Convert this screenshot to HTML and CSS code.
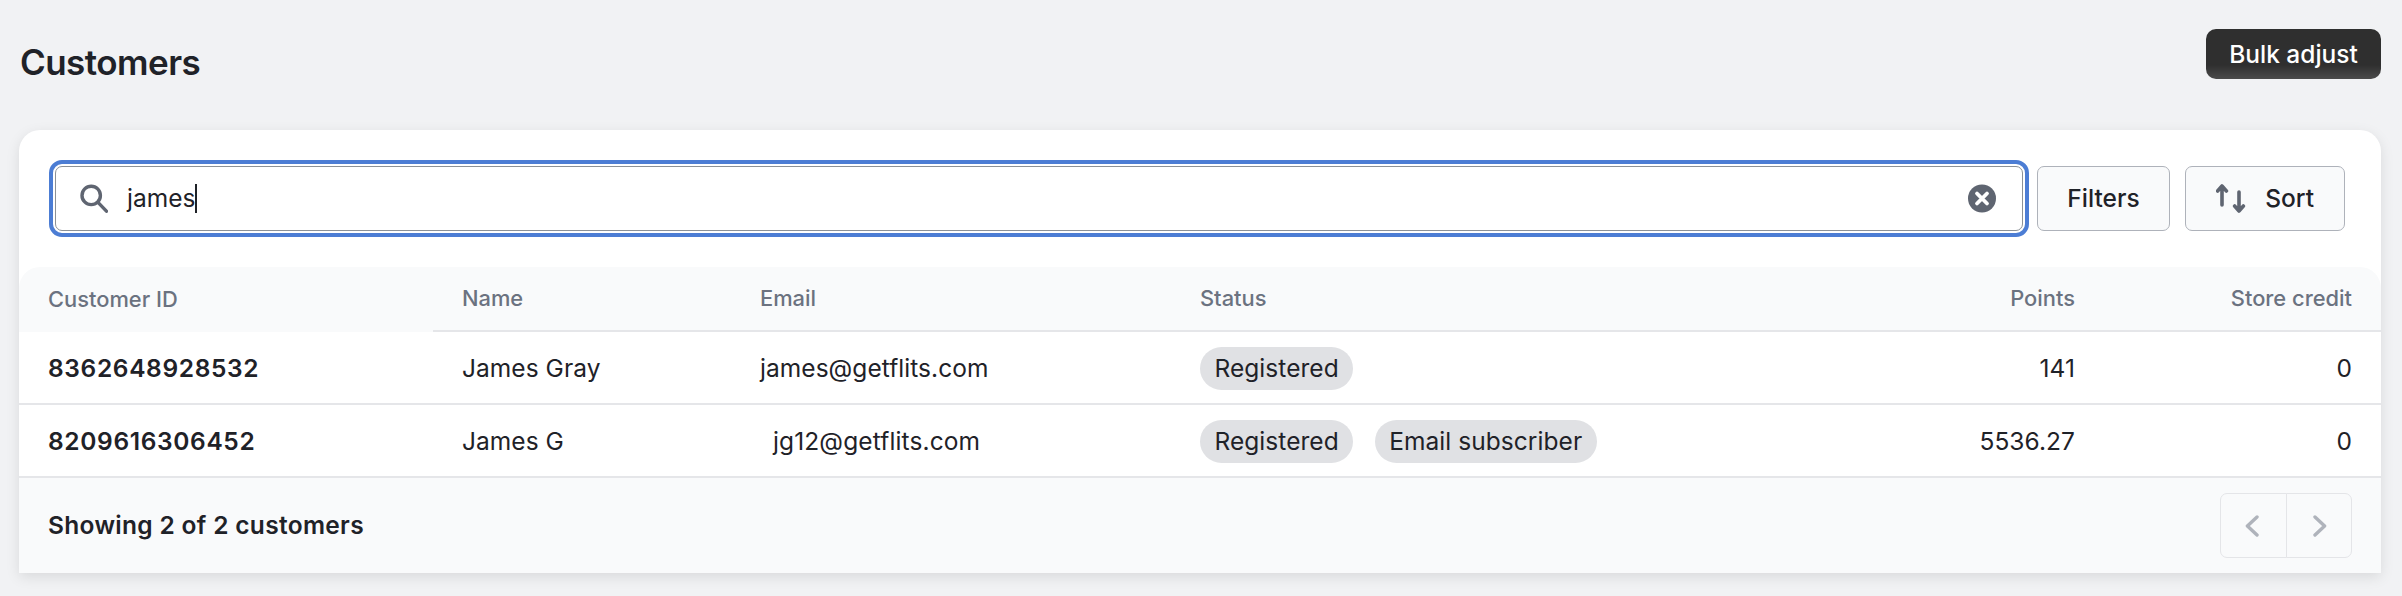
FILE: index.html
```html
<!DOCTYPE html>
<html lang="en">
<head>
<meta charset="utf-8">
<title>Customers</title>
<link rel="stylesheet" href="styles.css">
</head>
<body>
<main class="page">
  <header class="page-header">
    <h1 class="page-title">Customers</h1>
    <button class="btn-primary" type="button">Bulk adjust</button>
  </header>
  <section class="card">
    <div class="toolbar">
      <div class="search">
        <svg class="icon" viewBox="0 0 28 29" fill="none" stroke="#5f6571" stroke-width="3.4" stroke-linecap="round">
          <circle cx="11.2" cy="11.4" r="9.2"/>
          <path d="M18 18.4 26.4 27.2"/>
        </svg>
        <span class="search-value">james<span class="caret"></span></span>
        <svg class="icon" viewBox="0 0 28 29">
          <circle cx="14" cy="14.5" r="14" fill="#5f6571"/>
          <path d="M9 9.5 19 19.5M19 9.5 9 19.5" stroke="#fff" stroke-width="3.8" stroke-linecap="round"/>
        </svg>
      </div>
      <button class="btn" type="button">Filters</button>
      <button class="btn btn-sort" type="button">
        <svg class="icon-sort" viewBox="0 0 30 29" fill="none" stroke="#5f6571" stroke-width="3.6" stroke-linecap="round" stroke-linejoin="round">
          <path d="M6 21V2M1.6 7 6 2l4.4 5"/>
          <path d="M23 8v19M18.6 22l4.4 5 4.4-5"/>
        </svg>
        Sort
      </button>
    </div>
    <table class="table">
      <colgroup>
        <col class="col-id"><col class="col-name"><col class="col-email"><col class="col-status"><col class="col-points"><col class="col-credit">
      </colgroup>
      <thead>
        <tr>
          <th class="cell-id">Customer ID</th>
          <th>Name</th>
          <th>Email</th>
          <th>Status</th>
          <th class="num">Points</th>
          <th class="num">Store credit</th>
        </tr>
      </thead>
      <tbody>
        <tr>
          <td class="cell-id">8362648928532</td>
          <td>James Gray</td>
          <td>james@getflits.com</td>
          <td><div class="pills"><span class="pill">Registered</span></div></td>
          <td class="num">141</td>
          <td class="num">0</td>
        </tr>
        <tr>
          <td class="cell-id">8209616306452</td>
          <td>James G</td>
          <td><span class="email-indent">jg12@getflits.com</span></td>
          <td><div class="pills"><span class="pill">Registered</span><span class="pill">Email subscriber</span></div></td>
          <td class="num">5536.27</td>
          <td class="num">0</td>
        </tr>
      </tbody>
    </table>
    <footer class="card-footer">
      <span class="count">Showing 2 of 2 customers</span>
      <div class="pager">
        <button class="pager-btn" type="button" aria-label="Previous">
          <svg class="icon-chevron" viewBox="0 0 14 22" fill="none" stroke="#afb3bb" stroke-width="3.4" stroke-linecap="round" stroke-linejoin="round"><path d="M12 2 2.4 11 12 20"/></svg>
        </button>
        <button class="pager-btn" type="button" aria-label="Next">
          <svg class="icon-chevron" viewBox="0 0 14 22" fill="none" stroke="#afb3bb" stroke-width="3.4" stroke-linecap="round" stroke-linejoin="round"><path d="M2 2l9.6 9L2 20"/></svg>
        </button>
      </div>
    </footer>
  </section>
</main>
</body>
</html>
```

FILE: styles.css
```css
* { box-sizing: border-box; }

html, body { height: 100%; }

body {
  margin: 0;
  background: #f1f2f4;
  color: #1f2228;
  font-family: Inter, "Liberation Sans", sans-serif;
  font-size: 24.5px;
  line-height: 35px;
}

button { font: inherit; color: inherit; cursor: pointer; }

.page { padding: 29px 21px 24px 19px; }

.page-header {
  display: flex;
  justify-content: space-between;
  align-items: flex-start;
  height: 101px;
}

.page-title {
  margin: 9px 0 0 1px;
  font-size: 35px;
  line-height: 49px;
  font-weight: 600;
  letter-spacing: -0.55px;
}

.btn-primary {
  width: 175px;
  height: 50px;
  padding: 0;
  border: 0;
  border-radius: 10px;
  background: linear-gradient(#2f2f2f 72%, #4b4b4b);
  color: #fff;
  font-weight: 500;
}

.card {
  background: #fff;
  border-radius: 21px 21px 0 0;
  box-shadow: 0 4px 14px rgba(0, 0, 0, 0.1);
}

.toolbar {
  display: flex;
  align-items: center;
  height: 137px;
  padding: 0 36px;
}

.search {
  flex: 1;
  display: flex;
  align-items: center;
  gap: 19px;
  height: 65px;
  padding: 0 26px 0 24px;
  border: 1.75px solid #8c9196;
  border-radius: 7px;
  outline: 4px solid #4c7dd4;
  outline-offset: 2px;
  background: #fff;
}

.icon { width: 28px; height: 29px; flex: none; }

.search-value { flex: 1; display: flex; align-items: center; height: 29px; }

.caret { width: 2px; height: 29px; background: #1f2228; }

.btn {
  display: inline-flex;
  align-items: center;
  height: 65px;
  margin-left: 14px;
  padding: 0 29.5px;
  border: 1.75px solid #aeb2ba;
  border-radius: 7px;
  background: #f9fafb;
  font-weight: 500;
}

.btn-sort { gap: 19px; margin-left: 15px; padding: 0 30px; }

.icon-sort { width: 30px; height: 29px; flex: none; }

.table {
  width: 100%;
  table-layout: fixed;
  border-collapse: separate;
  border-spacing: 0;
}

.col-id { width: 414px; }
.col-name { width: 298px; }
.col-email { width: 440px; }
.col-status { width: 729px; }
.col-points { width: 204px; }

th, td {
  padding: 0 29px 0 29px;
  text-align: left;
  white-space: nowrap;
}

th {
  height: 65px;
  background: #f9fafb;
  border-bottom: 2px solid #e5e6e9;
  color: #6b7280;
  font-size: 21.875px;
  font-weight: 450;
}

td {
  height: 73px;
  padding-top: 2px;
  border-bottom: 2px solid #e5e6e9;
  letter-spacing: 0.05px;
}

th:first-child { border-top-left-radius: 21px; }
th:last-child { border-top-right-radius: 21px; }

th.cell-id { border-bottom: 0; }

td.cell-id {
  font-weight: 600;
  letter-spacing: 0.65px;
}

.num { text-align: right; }

.email-indent { padding-left: 13px; letter-spacing: 0.12px; }

.pills { display: flex; gap: 21.5px; }

.pill {
  display: inline-flex;
  align-items: center;
  height: 43px;
  padding: 0 14.5px;
  border-radius: 22px;
  background: #e0e1e4;
}

.card-footer {
  display: flex;
  align-items: center;
  justify-content: space-between;
  height: 95px;
  padding: 0 29px;
  background: #f9fafb;
}

.count { font-weight: 600; letter-spacing: 0.32px; }

.pager { display: flex; }

.pager-btn {
  display: flex;
  align-items: center;
  justify-content: center;
  width: 66.5px;
  height: 65px;
  padding: 0 2px 0 0;
  border: 1.75px solid #e4e5e8;
  border-radius: 7px 0 0 7px;
  background: #f9fafb;
}

.pager-btn + .pager-btn {
  margin-left: -1px;
  padding: 0 0 0 2px;
  border-radius: 0 7px 7px 0;
}

.icon-chevron { width: 14px; height: 22px; }
```
